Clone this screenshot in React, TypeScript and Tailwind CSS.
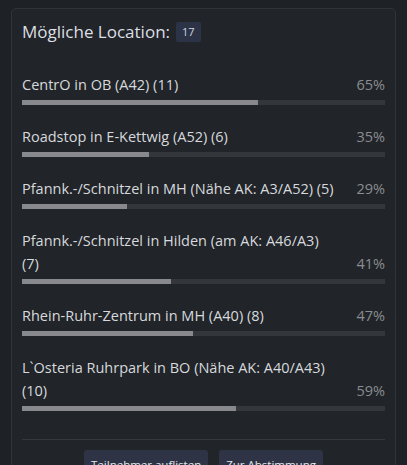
import React from "react";

const items = [
  { label: "CentrO in OB (A42) (11)", pct: 65 },
  { label: "Roadstop in E-Kettwig (A52) (6)", pct: 35 },
  { label: "Pfannk.-/Schnitzel in MH (Nähe AK: A3/A52) (5)", pct: 29 },
  { label: "Pfannk.-/Schnitzel in Hilden (am AK: A46/A3) (7)", pct: 41 },
  { label: "Rhein-Ruhr-Zentrum in MH (A40) (8)", pct: 47 },
  { label: "L`Osteria Ruhrpark in BO (Nähe AK: A40/A43) (10)", pct: 59 },
];

export default function App() {
  return (
    <div
      className="w-[407px] h-[465px] overflow-hidden bg-[#1e2125] pt-[8px] px-[11px]"
      style={{ fontFamily: '"Open Sans", "Noto Sans", sans-serif' }}
    >
      <div className="rounded-[5px] border border-[#30343a] bg-[#212428] px-[10px] pt-[11px] pb-[20px]">
        <div className="flex items-center gap-[6px] h-[24px]">
          <span className="text-[17px] text-[#dcdfe3] leading-[24px]">Mögliche Location:</span>
          <span className="bg-[#2c3346] text-[#cfd5e0] text-[11px] leading-[20px] h-[20px] px-[6px] rounded-[2px]">17</span>
        </div>
        <div className="mt-[29px] flex flex-col gap-[20px]">
          {items.map((it) => (
            <div key={it.label} className="flex flex-col">
              <div className="flex items-end justify-between gap-[20px] text-[14.5px] leading-[23px]">
                <span className="text-[#d6d9dd]">{it.label}</span>
                <span className="text-[#8a8d91] shrink-0">{it.pct}%</span>
              </div>
              <div className="mt-[4px] h-[5px] bg-[#33373c]">
                <div className="h-full bg-[#87898c]" style={{ width: `${it.pct}%` }} />
              </div>
            </div>
          ))}
        </div>
        <div className="mt-[28px] border-t border-[#34383d]" />
        <div className="mt-[10px] flex justify-center gap-[11px]">
          <button className="bg-[#2e3446] text-[#e4e7ec] text-[11.5px] leading-[30px] px-[7px] rounded-[3px]">
            Teilnehmer auflisten
          </button>
          <button className="bg-[#2e3446] text-[#e4e7ec] text-[11.5px] leading-[30px] px-[7px] rounded-[3px]">
            Zur Abstimmung
          </button>
        </div>
      </div>
    </div>
  );
}
